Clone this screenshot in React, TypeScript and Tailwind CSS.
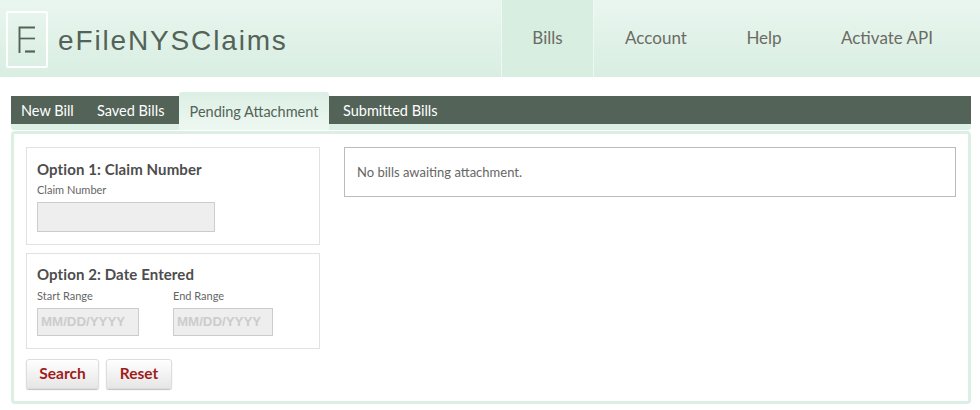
import * as React from 'react'

const bodyFont = "font-['Lato','Noto_Sans',sans-serif]"

const navItems = [
  { label: 'Account', width: 'w-[124px]' },
  { label: 'Help', width: 'w-[92px]' },
  { label: 'Activate API', width: 'w-[154px]' },
]

function FieldLabel({ children }: { children: React.ReactNode }) {
  return <div className="text-[11px] leading-[14px] text-[#666]">{children}</div>
}

function DateField({ label, width }: { label: string; width: string }) {
  return (
    <div className={width}>
      <FieldLabel>{label}</FieldLabel>
      <div className="mt-[5px] flex h-[28px] items-center border border-[#ccc] bg-[#eee] pl-[3px] font-['Liberation_Sans',sans-serif] text-[13.3px] font-bold text-[#ccc]">
        MM/DD/YYYY
      </div>
    </div>
  )
}

function RedButton({ label, width }: { label: string; width: string }) {
  return (
    <button className={`${width} h-[30px] rounded-[3px] border border-[#ddd] bg-gradient-to-b from-white to-[#e6e6e6] text-[15.5px] font-bold text-[#a01c1c] shadow-[0_1px_1px_rgba(0,0,0,0.25)]`}>
      {label}
    </button>
  )
}

export default function App() {
  return (
    <div className={`h-[410px] w-[980px] overflow-hidden bg-white ${bodyFont}`}>
      <header className="flex h-[77px] bg-gradient-to-b from-[#e9f6ef] to-[#d9eee2]">
        <div className="ml-[6px] mt-[11px] flex h-[57px] w-[42px] items-center justify-center rounded-[2px] border-2 border-white">
          <svg width="20" height="28" viewBox="0 0 20 28" fill="none" stroke="#536358">
            <path d="M2.5 27V1.5H18" strokeWidth="1.9" />
            <path d="M3 12.5H18" strokeWidth="1.7" />
            <path d="M8 25.5H18" strokeWidth="2.2" />
          </svg>
        </div>
        <div className="ml-[10px] mt-[24px] font-['Liberation_Sans',sans-serif] text-[28px] leading-[34px] tracking-[1.85px] text-[#536358]">
          eFileNYSClaims
        </div>
        <nav className="ml-auto mr-[16px] flex text-[17px] text-[#6b6b63]">
          <div className="flex w-[93px] items-center justify-center border-x border-[#eef8f2] bg-[#d8eee1] pb-[1px]">
            Bills
          </div>
          {navItems.map((item) => (
            <div key={item.label} className={`flex ${item.width} items-center justify-center pb-[1px]`}>
              {item.label}
            </div>
          ))}
        </nav>
      </header>

      <div className="ml-[11px] mt-[19px] w-[960px]">
        <div className="flex h-[28px] bg-[#536358] pl-[10px] pt-[2px] text-[14.5px] text-white">
          <div className="flex w-[76px] items-center">New Bill</div>
          <div className="flex w-[82px] items-center">Saved Bills</div>
          <div className="z-10 -mt-[6px] flex h-[38px] w-[150px] justify-center rounded-t-[3px] bg-gradient-to-b from-[#dcefe4] to-[#eef8f2] pt-[9px] text-[#536358]">
            Pending Attachment
          </div>
          <div className="ml-[14px] flex items-center">Submitted Bills</div>
        </div>
        <div className="h-[6px] rounded-b-[3px] bg-[#dcefe4]" />

        <main className="mt-[1px] flex h-[273px] rounded-[4px] border-[3px] border-[#dcefe4] bg-white pl-[12px] pr-[12px] pt-[13px]">
          <div className="w-[294px]">
            <section className="h-[98px] border border-[#e2e2e2] px-[10px] pt-[11px]">
              <h2 className="text-[15px] font-bold leading-[20px] tracking-[0.1px] text-[#4d4d4d]">Option 1: Claim Number</h2>
              <div className="mt-[4px]">
                <FieldLabel>Claim Number</FieldLabel>
              </div>
              <div className="mt-[5px] h-[30px] w-[178px] border border-[#ccc] bg-[#eee]" />
            </section>
            <section className="mt-[8px] h-[96px] border border-[#e2e2e2] px-[10px] pt-[10px]">
              <h2 className="text-[15px] font-bold leading-[20px] tracking-[0.1px] text-[#4d4d4d]">Option 2: Date Entered</h2>
              <div className="mt-[5px] flex gap-[34px]">
                <DateField label="Start Range" width="w-[102px]" />
                <DateField label="End Range" width="w-[100px]" />
              </div>
            </section>
            <div className="mt-[10px] flex gap-[7px]">
              <RedButton label="Search" width="w-[73px]" />
              <RedButton label="Reset" width="w-[66px]" />
            </div>
          </div>
          <div className="ml-[24px] flex h-[50px] w-[612px] items-center border border-[#bbb] pl-[12px] pt-[1px] text-[13px] text-[#666]">
            No bills awaiting attachment.
          </div>
        </main>
      </div>
    </div>
  )
}
